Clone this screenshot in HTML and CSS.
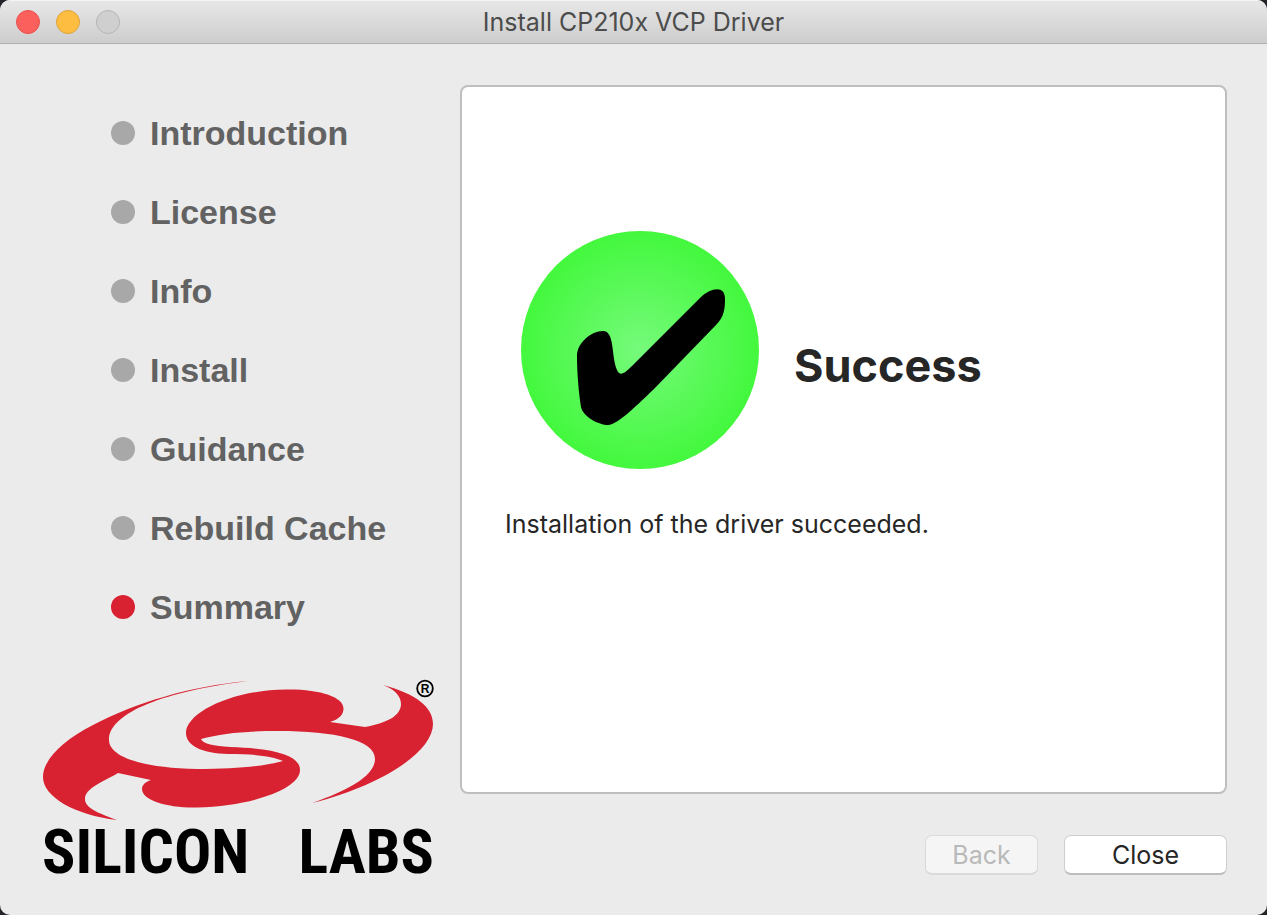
FILE: index.html
```html
<!DOCTYPE html>
<html lang="en">
<head>
<meta charset="utf-8">
<title>Install CP210x VCP Driver</title>
<link rel="stylesheet" href="styles.css">
</head>
<body>
<div class="window">
  <header class="titlebar">
    <div class="lights">
      <button class="light light-close" type="button" aria-label="Close window"></button>
      <button class="light light-minimize" type="button" aria-label="Minimize window"></button>
      <button class="light light-zoom" type="button" aria-label="Zoom window" disabled></button>
    </div>
    <h1 class="title">Install CP210x VCP Driver</h1>
  </header>
  <div class="content">
    <aside class="sidebar">
      <ol class="steps">
        <li class="step">Introduction</li>
        <li class="step">License</li>
        <li class="step">Info</li>
        <li class="step">Install</li>
        <li class="step">Guidance</li>
        <li class="step">Rebuild Cache</li>
        <li class="step step-current" aria-current="step">Summary</li>
      </ol>
      <div class="brand">
        <svg class="brand-mark" viewBox="42 678 392 144" aria-hidden="true">
          <path fill="#d92231" d="M248 681 C190 686 135 703 93 725 C62 741 43 760 43 777 C43 797 75 815 117 820 C98 813 85 808 85 799 C85 788 103 782 118 773 L151 780 C145 782 142 785 142 789 C142 800 166 808 197 807.500 C252 806 300 789 300 770 C300 756 277 748.500 230 747 C214 746 203 744 201 739 C222 733 247 731 278 731 C335 731 375 740 375 759 C375 775 350 790 312 803 C381 786 433 752 433 724 C433 707 416 694 383 685 C396 690 401 697 401 704 C401 715 388 723 365 727 L330 722 C340 719 343.500 714 343.500 708.500 C343.500 697 320 689 286 689.500 C231 690 186 713 186 733 C186 746 203 753.500 228 754 C253 754 272 756 283 761 C266 766 236 769 197 769 C143 768 109 757 109 740 C109 712 167 691 248 681 Z"/>
          <circle cx="425" cy="688.500" r="7.800" fill="none" stroke="#000" stroke-width="1.800"/>
          <text class="brand-registered" x="425" y="693" text-anchor="middle">R</text>
        </svg>
        <div class="wordmark"><span>SILICON</span> <span>LABS</span></div>
      </div>
    </aside>
    <main class="panel">
      <div class="result">
        <svg class="result-icon" viewBox="0 0 238 238" aria-hidden="true">
          <defs>
            <radialGradient id="glow">
              <stop offset="0" stop-color="#76fa7b"/>
              <stop offset="1" stop-color="#43f83d"/>
            </radialGradient>
          </defs>
          <circle cx="119" cy="119" r="119" fill="url(#glow)"/>
          <path d="M82 100 C70 100 56 112 56 125 C56 144 58 163 60 176 C62 186 78 194 87 194 C97 194 119 171 132 159 L195 94 C203 86 204 78 204 68 C204 54 190 57 180 66 L111 135 C104 142 99 146 96 139 C90 125 94 100 82 100 Z"/>
        </svg>
        <h2 class="result-title">Success</h2>
      </div>
      <p class="message">Installation of the driver succeeded.</p>
    </main>
    <footer class="actions">
      <button class="button button-back" type="button" disabled>Back</button>
      <button class="button button-close" type="button">Close</button>
    </footer>
  </div>
</div>
</body>
</html>
```
FILE: styles.css
```css
* {
  box-sizing: border-box;
}

body {
  margin: 0;
  background: #26242a;
  font-family: Inter, "Liberation Sans", sans-serif;
  color: #262626;
}

.window {
  display: flex;
  flex-direction: column;
  min-height: 100vh;
  border-radius: 10px;
  background: #ebebeb;
  overflow: hidden;
}

.titlebar {
  display: grid;
  grid-template-columns: 1fr auto 1fr;
  align-items: center;
  height: 44px;
  padding: 0 16px;
  background: linear-gradient(#e7e7e7, #cdcdcd);
  border-top: 1px solid #f4f4f4;
  border-bottom: 1px solid #b0b0b0;
}

.lights {
  display: flex;
  gap: 16px;
}

.light {
  width: 24px;
  height: 24px;
  padding: 0;
  border: 1px solid;
  border-radius: 50%;
}

.light-close {
  background: #fc605c;
  border-color: #e9514e;
}

.light-minimize {
  background: #fdbd40;
  border-color: #dfa23a;
}

.light-zoom {
  background: #cfcfcf;
  border-color: #b5b5b5;
}

.title {
  margin: 0;
  font-size: 25px;
  line-height: 32px;
  font-weight: 400;
  color: #4c4c4c;
}

.content {
  flex: 1;
  display: grid;
  grid-template-columns: 460px 1fr;
  grid-template-rows: 1fr auto;
  row-gap: 41px;
  padding: 41px 40px 40px 0;
}

.sidebar {
  grid-row: 1 / 3;
  display: flex;
  flex-direction: column;
  justify-content: space-between;
  padding-top: 28px;
}

.steps {
  display: flex;
  flex-direction: column;
  gap: 39px;
  margin: 0;
  padding: 0 0 0 111px;
  list-style: none;
}

.step {
  display: flex;
  align-items: center;
  gap: 15px;
  font: bold 34px/40px "Liberation Sans", Arial, sans-serif;
  color: #626262;
}

.step::before {
  content: "";
  width: 24px;
  height: 24px;
  border-radius: 50%;
  background: #a8a8a8;
}

.step-current::before {
  background: #d92231;
}

.brand {
  width: 392px;
  margin-left: 42px;
}

.brand-mark {
  display: block;
  width: 100%;
  overflow: visible;
}

.brand-registered {
  font: bold 12px "Liberation Sans", Arial, sans-serif;
}

.wordmark {
  display: flex;
  justify-content: space-between;
  margin-top: 7px;
  font: 700 62px/46px "Roboto Condensed", Roboto, sans-serif;
  color: #000;
}

.panel {
  padding: 144px 43px 40px;
  background: #fff;
  border: 2px solid #bfbfbf;
  border-radius: 8px;
}

.result {
  display: flex;
  align-items: center;
  gap: 35px;
  padding-left: 16px;
}

.result-icon {
  width: 238px;
  height: 238px;
}

.result-title {
  margin: 32px 0 0;
  font-size: 45px;
  line-height: 56px;
  font-weight: 700;
}

.message {
  margin: 39px 0 0;
  font-size: 25px;
  line-height: 32px;
}

.actions {
  display: flex;
  justify-content: flex-end;
  gap: 26px;
}

.button {
  height: 40px;
  padding: 0;
  border: 1px solid #cecece;
  border-bottom: 2px solid #bdbdbd;
  border-radius: 7px;
  background: #fff;
  font: 25px/32px Inter, "Liberation Sans", sans-serif;
  color: #262626;
}

.button-back {
  width: 113px;
  background: #f5f5f5;
  border-color: #dadada;
  color: #b9b9b9;
}

.button-close {
  width: 163px;
}
```
